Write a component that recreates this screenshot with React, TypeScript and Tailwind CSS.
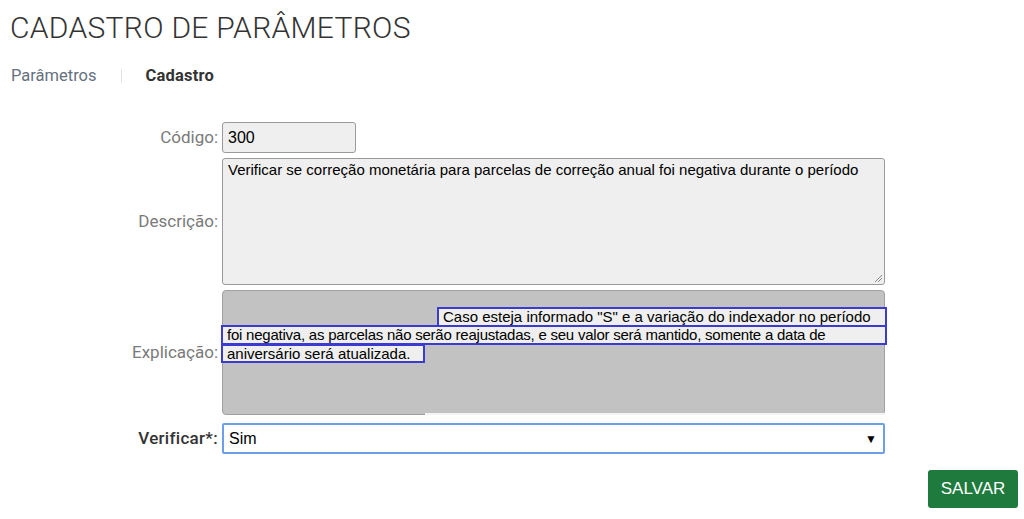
import React from "react";

const labelCls =
  "w-[220px] shrink-0 pr-[2px] text-right text-[17px] text-[#7a7a7a] font-['Roboto',sans-serif]";

export default function App() {
  return (
    <div className="w-[1024px] h-[519px] bg-white overflow-hidden relative font-['Roboto',sans-serif]">
      <h1 className="pl-[10px] pt-[10px] text-[30px] leading-[36px] font-light text-[#333] tracking-[0.3px]">
        CADASTRO DE PARÂMETROS
      </h1>
      <div className="flex items-center pl-[11px] mt-[20px] text-[16.5px] leading-[20px]">
        <span className="text-[#657080]">Parâmetros</span>
        <span className="ml-[24px] w-px h-[14px] bg-[#e2e2e2]" />
        <span className="ml-[24px] font-bold text-[#333] tracking-[0.2px]">Cadastro</span>
      </div>

      <div className="mt-[36px] flex flex-col">
        <div className="flex items-center h-[31px]">
          <label className={labelCls}>Código:</label>
          <div className="ml-[2px] w-[134px] h-[31px] rounded-[3px] border border-[#9a9a9a] bg-[#efefef] pl-[5px] flex items-center text-[16px] text-black font-['Liberation_Sans',Arial,sans-serif]">
            300
          </div>
        </div>

        <div className="flex items-center mt-[5px]">
          <label className={labelCls}>Descrição:</label>
          <div className="relative ml-[2px] w-[663px] h-[127px] rounded-[3px] border border-[#9a9a9a] bg-[#efefef] pl-[5px] pt-[2px] text-[15px] leading-[18px] text-black font-['Liberation_Sans',Arial,sans-serif]">
            Verificar se correção monetária para parcelas de correção anual foi negativa durante o período
            <svg className="absolute right-[1px] bottom-[1px]" width="10" height="10" viewBox="0 0 10 10">
              <line x1="2" y1="9" x2="9" y2="2" stroke="#8a8a8a" strokeWidth="1" />
              <line x1="5" y1="9" x2="9" y2="5" stroke="#8a8a8a" strokeWidth="1" />
            </svg>
          </div>
        </div>

        <div className="flex items-center mt-[5px]">
          <label className={labelCls}>Explicação:</label>
          <div className="relative ml-[2px] w-[663px] h-[125px] rounded-[4px] border border-[#a0a0a0] bg-[#c2c2c2] pt-[16px] text-[15px] leading-[15px] text-black font-['Liberation_Sans',Arial,sans-serif]">
            <div className="ml-[214px] mr-[-3px] h-[20px] border-2 border-[#3b3bd2] bg-[#efefef] pl-[4px] whitespace-nowrap">
              Caso esteja informado "S" e a variação do indexador no período
            </div>
            <div className="ml-[-2px] mr-[-3px] mt-[-2px] h-[20px] border-2 border-[#3b3bd2] bg-[#efefef] pl-[4px] whitespace-nowrap tracking-[-0.23px]">
              foi negativa, as parcelas não serão reajustadas, e seu valor será mantido, somente a data de
            </div>
            <div className="ml-[-2px] mt-[-1px] w-[204px] h-[19px] border-2 border-[#3b3bd2] bg-[#efefef] pl-[4px] whitespace-nowrap">
              aniversário será atualizada.
            </div>
            <div className="absolute left-[202px] right-[-1px] bottom-[-1px] h-[2px] bg-[#f4f4f4]" />
          </div>
        </div>

        <div className="flex items-center mt-[8px]">
          <label className="w-[220px] shrink-0 pr-[2px] text-right text-[17px] font-medium text-[#333] tracking-[0.3px]">
            Verificar*:
          </label>
          <div className="ml-[2px] w-[663px] h-[31px] rounded-[2px] border-2 border-[#6f9ee8] bg-white flex items-center justify-between pl-[5px] pr-[6px] text-[16px] text-black font-['Liberation_Sans',Arial,sans-serif]">
            <span>Sim</span>
            <span className="text-[12px] leading-none">▼</span>
          </div>
        </div>

        <div className="flex justify-end mt-[16px] pr-[6px]">
          <button className="w-[90px] h-[38px] rounded-[3px] bg-[#1f7a3e] text-white text-[17px] font-['Liberation_Sans',Arial,sans-serif]">
            SALVAR
          </button>
        </div>
      </div>
    </div>
  );
}
